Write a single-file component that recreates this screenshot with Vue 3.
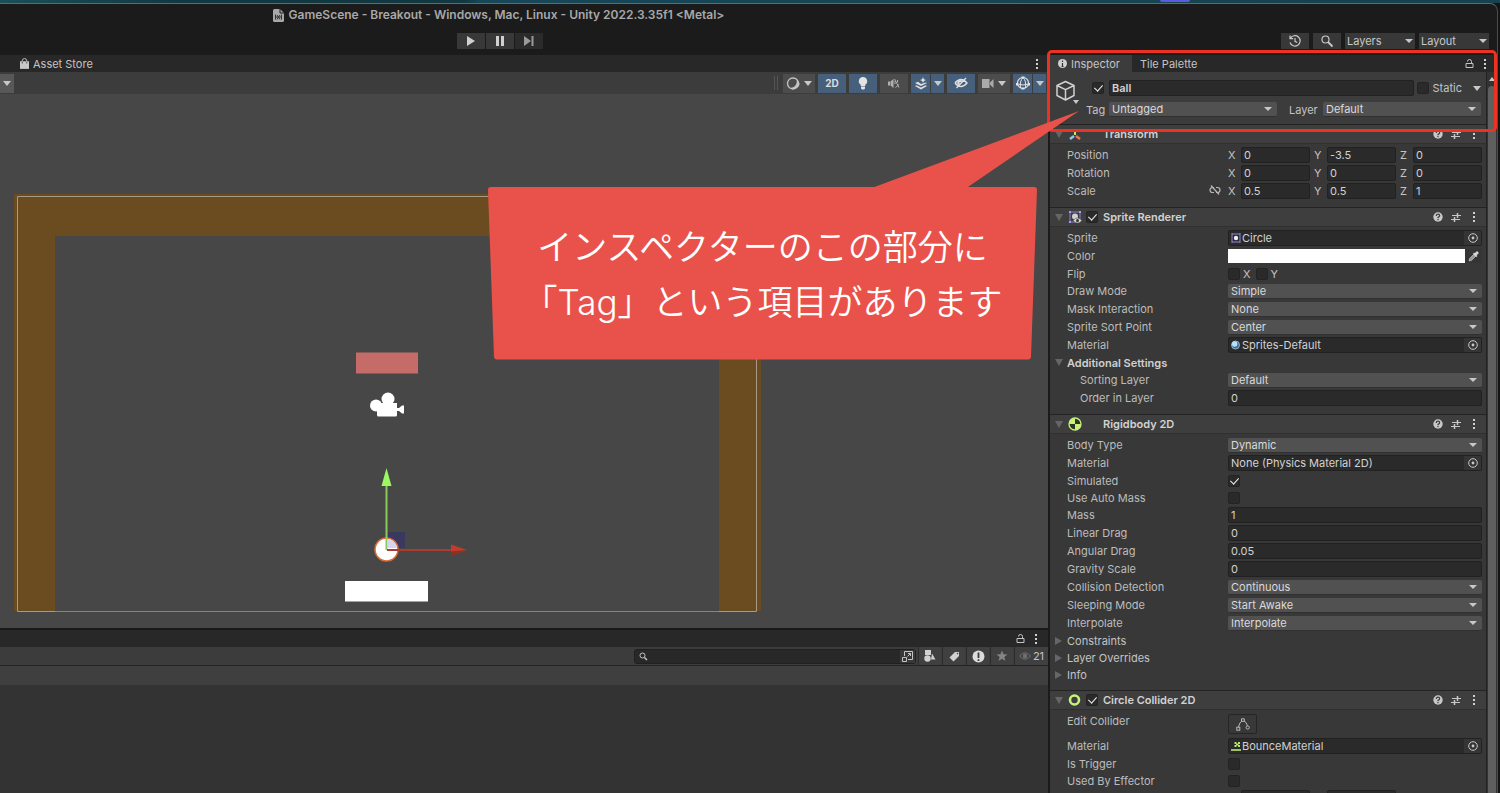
<script setup>
import { ref } from 'vue'

const sections = ref([
  {
    id: 'transform', title: 'Transform', icon: 'axes', toggle: false,
    rows: [
      { kind: 'vector', label: 'Position', values: [['X', '0'], ['Y', '-3.5'], ['Z', '0']] },
      { kind: 'vector', label: 'Rotation', values: [['X', '0'], ['Y', '0'], ['Z', '0']] },
      { kind: 'vector', label: 'Scale', link: true, values: [['X', '0.5'], ['Y', '0.5'], ['Z', '1']] }
    ]
  },
  {
    id: 'sprite', title: 'Sprite Renderer', icon: 'sprite', toggle: true,
    rows: [
      { kind: 'object', label: 'Sprite', value: 'Circle', icon: 'circleSprite' },
      { kind: 'color', label: 'Color' },
      { kind: 'flags', label: 'Flip', flags: ['X', 'Y'] },
      { kind: 'select', label: 'Draw Mode', value: 'Simple' },
      { kind: 'select', label: 'Mask Interaction', value: 'None' },
      { kind: 'select', label: 'Sprite Sort Point', value: 'Center' },
      { kind: 'object', label: 'Material', value: 'Sprites-Default', icon: 'sphere' },
      { kind: 'fold', label: 'Additional Settings', open: true },
      { kind: 'select', label: 'Sorting Layer', value: 'Default', indent: true },
      { kind: 'text', label: 'Order in Layer', value: '0', indent: true }
    ]
  },
  {
    id: 'rigidbody', title: 'Rigidbody 2D', icon: 'rigid', toggle: false,
    rows: [
      { kind: 'select', label: 'Body Type', value: 'Dynamic' },
      { kind: 'object', label: 'Material', value: 'None (Physics Material 2D)' },
      { kind: 'check', label: 'Simulated', checked: true },
      { kind: 'check', label: 'Use Auto Mass', checked: false },
      { kind: 'text', label: 'Mass', value: '1' },
      { kind: 'text', label: 'Linear Drag', value: '0' },
      { kind: 'text', label: 'Angular Drag', value: '0.05' },
      { kind: 'text', label: 'Gravity Scale', value: '0' },
      { kind: 'select', label: 'Collision Detection', value: 'Continuous' },
      { kind: 'select', label: 'Sleeping Mode', value: 'Start Awake' },
      { kind: 'select', label: 'Interpolate', value: 'Interpolate' },
      { kind: 'fold', label: 'Constraints', open: false },
      { kind: 'fold', label: 'Layer Overrides', open: false },
      { kind: 'fold', label: 'Info', open: false }
    ]
  },
  {
    id: 'collider', title: 'Circle Collider 2D', icon: 'ring', toggle: true,
    rows: [
      { kind: 'edit', label: 'Edit Collider' },
      { kind: 'object', label: 'Material', value: 'BounceMaterial', icon: 'bounce' },
      { kind: 'check', label: 'Is Trigger', checked: false },
      { kind: 'check', label: 'Used By Effector', checked: false },
      { kind: 'vector', label: '', values: [['', ''], ['', '']] }
    ]
  }
])
</script>

<template>
  <div class="desktop">
    <div class="backdrop"><span class="dock-tab"></span></div>
    <div class="window">
      <header class="titlebar">
        <h1>
          <svg width="11" height="13" viewBox="0 0 11 13"><path d="M0 1.500Q0 0 1.500 0H7l4 4v7.500q0 1.500-1.500 1.500h-8Q0 13 0 11.500z" fill="#a8a8a8"/><path d="M7 0v4h4" fill="none" stroke="#1b1b1b"/><path d="M2.500 5.500v5M8.500 5.500v5M2.500 8h6M4 6l1.500 2L7 6M4 10.500 5.500 8 7 10.500" fill="none" stroke="#333"/></svg>
          GameScene - Breakout - Windows, Mac, Linux - Unity 2022.3.35f1 &lt;Metal&gt;
        </h1>
      </header>
      <div class="mainbar">
        <div class="playback">
          <button aria-label="Play"><svg width="10" height="10" viewBox="0 0 10 10"><path d="M1 0l8 5-8 5z" fill="#d0d0d0"/></svg></button>
          <button aria-label="Pause"><svg width="10" height="10" viewBox="0 0 10 10"><path d="M1 0h3v10H1zM6 0h3v10H6z" fill="#d0d0d0"/></svg></button>
          <button aria-label="Step" class="dim"><svg width="10" height="10" viewBox="0 0 10 10"><path d="M0 0l7 5-7 5zM7.500 0h2v10h-2z" fill="#9a9a9a"/></svg></button>
        </div>
        <div class="global">
          <button aria-label="History"><svg width="14" height="14" viewBox="0 0 14 14" fill="none" stroke="#c8c8c8" stroke-width="1.200"><path d="M2.300 4.500A5.200 5.200 0 1 1 2 8.500M2 1.500v3.200h3.200M7 4v3.300l2.200 1.200"/></svg></button>
          <button aria-label="Search"><svg width="14" height="14" viewBox="0 0 14 14" fill="none" stroke="#c8c8c8" stroke-width="1.200"><circle cx="5.500" cy="5.500" r="3.500"/><path d="M8 8l4.500 4.500" stroke-width="1.800"/></svg></button>
          <span class="select dark"><select aria-label="Layers"><option>Layers</option></select></span>
          <span class="select dark"><select aria-label="Layout"><option>Layout</option></select></span>
        </div>
      </div>

      <main class="workspace">
        <div class="left">
          <nav class="tabs">
            <button class="tab store">
              <svg width="9" height="11" viewBox="0 0 10 12"><path d="M0 3.500h10V12H0z" fill="#c8c8c8"/><path d="M2.500 6V3a2.500 2.500 0 0 1 5 0v3" fill="none" stroke="#c8c8c8"/><path d="M2.500 4v2M7.500 4v2" stroke="#444"/></svg>
              Asset Store
            </button>
            <button class="more" aria-label="Scene options"><i class="dots"></i></button>
          </nav>
          <div class="scenebar">
            <button class="tool edge" aria-label="Tool settings"><i class="tri"></i></button>
            <span class="grip"></span>
            <button class="tool wide" aria-label="Shading"><svg width="15" height="15" viewBox="0 0 15 15"><circle cx="7" cy="7.500" r="5.500" fill="none" stroke="#c4c4c4" stroke-width="1.300"/><path d="M10 2.500a6.500 6.500 0 0 1-6.500 9.500Q8 15 12 11t-2-8.500z" fill="#c4c4c4"/></svg><i class="tri"></i></button>
            <button class="tool on">2D</button>
            <button class="tool on" aria-label="Lighting"><svg width="10" height="13" viewBox="0 0 10 13"><path d="M5 0a4.200 4.200 0 0 1 2.300 7.700V9H2.700V7.700A4.200 4.200 0 0 1 5 0zM3 9.500h4v2l-1 1H4l-1-1z" fill="#e4e4e4"/></svg></button>
            <button class="tool" aria-label="Audio"><svg width="12" height="11" viewBox="0 0 12 11"><path d="M0 3.500h2v4H0zM2.500 3.500 5.500 1v9L2.500 7.500z" fill="#b0b0b0"/><path d="M7 3v3M6.500 1l4.500 8.500M7.500 9.500 11 6.500M9.500 2v2.500" stroke="#b0b0b0"/></svg></button>
            <span class="split">
              <button class="tool on" aria-label="Effects"><svg width="14" height="13" viewBox="0 0 14 13"><path d="M1 6l3-1.300L7 7l5-1.500L13 6 7 9zM1 9l1.500-.7L7 10.500 11.500 8.300 13 9l-6 3.500z" fill="#e0e0e0"/><path d="M9 0l.9 2.300L12 3l-2.100.9L9 6l-.9-2.100L6 3l2.100-.7z" fill="#e0e0e0"/></svg></button>
              <button class="tool on" aria-label="Effects menu"><i class="tri"></i></button>
            </span>
            <button class="tool on" aria-label="Scene visibility"><svg width="14" height="12" viewBox="0 0 14 12" fill="none" stroke="#e0e0e0"><path d="M1 6q6-7 12 0-6 7-12 0M12 1 2.500 11" stroke-width="1.300"/><path d="M5 7.500a2 2 0 0 1 3-3" stroke-width="2"/></svg></button>
            <button class="tool wide" aria-label="Scene camera"><svg width="13" height="9" viewBox="0 0 13 9"><path d="M0 0h7.500v9H0zM8 3.500 11.500 0v9L8 5.500z" fill="#aaa"/></svg><i class="tri"></i></button>
            <span class="split">
              <button class="tool on" aria-label="Gizmos"><svg width="14" height="14" viewBox="0 0 14 14" fill="none" stroke="#e4e4e4"><circle cx="7" cy="7" r="5.500" stroke-width="1.200"/><path d="M7 1.500Q3.500 5 4.500 12M7 1.500Q10.500 5 9.500 12M1.500 8q5.500 2 11 0"/><path d="M5.500 1.500h3M1 7v2.500M13 7v2.500M5.500 12.500h3" stroke-width="2"/></svg></button>
              <button class="tool on" aria-label="Gizmos menu"><i class="tri"></i></button>
            </span>
          </div>

          <div class="scene">
            <svg width="100%" height="100%">
              <path d="M14 100H761V517H719V142H55V517H14z" fill="#6b4c21"/>
              <path d="M17.500 102.500H756.500V517.500H17.500z" fill="none" stroke="#a79a88"/>
              <path d="M55 517.500H719" stroke="#858585"/>
              <path d="M356 258.500h62v21h-62z" fill="#c56c68"/>
              <g fill="#fff">
                <circle cx="376" cy="311.500" r="6"/><circle cx="388" cy="305" r="6.500"/>
                <path d="M377 309h20v5h2l3-2.500h2v8h-2l-3-2.500h-2v4q0 1.500-1.500 1.500h-17q-1.500 0-1.500-1.500z"/>
                <path d="M345 487h83v20.500h-83z"/>
              </g>
              <path d="M388 438h17v16h-17z" fill="#39395f"/>
              <circle cx="386.500" cy="455.500" r="11.500" fill="#fff" stroke="#d96b35" stroke-width="1.500"/>
              <path d="M388 445a11 11 0 0 1 9 9h-9z" fill="#d5d5f2"/>
              <path d="M386.500 456V391" stroke="#8bc95a" stroke-width="2"/>
              <path d="M386.500 374l5 18h-10z" fill="#9cf762"/>
              <path d="M387 456H451" stroke="#ab3a31" stroke-width="2"/>
              <path d="M451 450.500l16 5.500-16 5.500z" fill="#c23b2b"/>
              <path d="M451 457.500l16-1.500-16 5.500z" fill="#8e2f22"/>
            </svg>
          </div>

          <nav class="tabs project">
            <button class="lock" aria-label="Lock project"><svg width="9" height="9" viewBox="0 0 9 9" fill="none" stroke="#c4c4c4"><path d="M1 4.500h7v4H1zM2.500 2.500q0-2 2-2t2 2v2"/></svg></button>
            <button class="more" aria-label="Project options"><i class="dots"></i></button>
          </nav>
          <div class="projectbar">
            <div class="search">
              <svg width="9" height="9" viewBox="0 0 9 9" fill="none" stroke="#c4c4c4"><circle cx="3.500" cy="3.500" r="2.500"/><path d="M5.500 5.500 8 8" stroke-width="1.500"/></svg>
              <input type="text" aria-label="Search project">
              <button aria-label="Open search window"><svg width="11" height="11" viewBox="0 0 11 11" fill="none" stroke="#c4c4c4"><path d="M2.500 5V.5h8v8H6M.5 6.500h4v4h-4zM5.500 5.500l3-3M6 2.500h2.500V5"/></svg></button>
            </div>
            <button aria-label="Filter by type"><svg width="12" height="12" viewBox="0 0 12 12" fill="#d0d0d0"><path d="M1 0h6v5H1zM8 3.500l3.500 6H7z"/><circle cx="3.500" cy="8.500" r="3.200"/></svg></button>
            <button aria-label="Filter by label"><svg width="11" height="11" viewBox="0 0 11 11"><path d="M6 1h4v4L4.500 10.500l-4-4z" fill="#d0d0d0"/><circle cx="8.500" cy="2.500" r=".8" fill="#444"/></svg></button>
            <button aria-label="Filter by log"><svg width="13" height="13" viewBox="0 0 13 13"><circle cx="6.500" cy="6.500" r="6" fill="#dcdcdc"/><path d="M6.500 2.500V8M6.500 9.200V11" stroke="#3c3c3c" stroke-width="1.800"/></svg></button>
            <button aria-label="Favorites"><svg width="12" height="12" viewBox="0 0 12 12"><path d="M6 .5 7.500 4.300l4 .2-3.200 2.500 1.200 4L6 8.800 2.500 11l1.200-4L.5 4.500l4-.2z" fill="#858585"/></svg></button>
            <button class="count"><svg width="12" height="8" viewBox="0 0 12 8"><path d="M.5 4q5.500-6.500 11 0-5.500 6.500-11 0z" fill="none" stroke="#707070"/><circle cx="6" cy="4" r="2.300" fill="#707070"/></svg>21</button>
          </div>
          <div class="crumbs"></div>
          <div class="assets"></div>
        </div>

        <aside class="inspector">
          <nav class="tabs">
            <button class="tab active"><svg width="9" height="9" viewBox="0 0 9 9"><circle cx="4.500" cy="4.500" r="4.500" fill="#d0d0d0"/><path d="M4.500 1.500V3M4.500 4v3.500M3.500 7.500h2" stroke="#333" stroke-width="1.200"/></svg>Inspector</button>
            <button class="tab">Tile Palette</button>
            <button class="lock" aria-label="Lock inspector"><svg width="9" height="9" viewBox="0 0 9 9" fill="none" stroke="#c4c4c4"><path d="M1 4.500h7v4H1zM2.500 2.500q0-2 2-2t2 2v2"/></svg></button>
            <button class="more" aria-label="Inspector options"><i class="dots"></i></button>
          </nav>
          <div class="scroller">
            <div class="content">
              <div class="object">
                <button class="cube" aria-label="Object icon">
                  <svg width="20" height="22" viewBox="0 0 20 22" fill="none" stroke="#d0d0d0" stroke-width="1.500" stroke-linejoin="round"><path d="M9.500 1.500 18 5.500v10l-8.500 4.500L1 15.500v-10zM1 5.500l8.500 4.200L18 5.500M9.500 9.700V20"/></svg>
                  <i class="tri"></i>
                </button>
                <div class="ident">
                  <div class="line">
                    <input type="checkbox" checked aria-label="Active" class="active-box">
                    <input type="text" class="field name" value="Ball" aria-label="Name">
                    <input type="checkbox" id="static">
                    <label for="static">Static</label>
                    <button class="drop" aria-label="Static options"><i class="tri"></i></button>
                  </div>
                  <div class="line">
                    <label for="tag" class="tag">Tag</label>
                    <span class="select tag-select"><select id="tag"><option>Untagged</option></select></span>
                    <label for="layer" class="layer">Layer</label>
                    <span class="select layer-select"><select id="layer"><option>Default</option></select></span>
                  </div>
                </div>
              </div>

              <section v-for="s in sections" :key="s.id">
                <header class="head">
                  <button class="fold-btn" :aria-label="'Fold ' + s.title"><i class="fold open"></i></button>
                  <svg class="kind" width="14" height="14" viewBox="0 0 14 14">
                    <template v-if="s.icon === 'axes'">
                      <path d="M7 8V2" stroke="#c8e66a" stroke-width="2"/><path d="M6 9 2 12" stroke="#8fc7ee" stroke-width="2.500"/><path d="M8 9l4 3" stroke="#f0764a" stroke-width="2.500"/>
                    </template>
                    <template v-else-if="s.icon === 'sprite'">
                      <path d="M2 2h10v10H2z" fill="none" stroke="#8a7fd0"/><path d="M1 1h2v2H1zM11 1h2v2h-2zM1 11h2v2H1z" fill="#a89cf0"/><circle cx="7" cy="6.500" r="3" fill="#d0d0d0"/><path d="M5 10.500q4.500-5 9 0-4.500 5-9 0z" fill="#d8d8d8" stroke="#3c3c3c" stroke-width=".5"/><circle cx="9.500" cy="10.500" r="1.500" fill="#333"/>
                    </template>
                    <template v-else-if="s.icon === 'rigid'">
                      <circle cx="7" cy="7" r="6" fill="#2e3420" stroke="#c5f27a" stroke-width="1.300"/><path d="M7 7V1a6 6 0 0 0-6 6zM7 7v6a6 6 0 0 0 6-6z" fill="#c5f27a"/>
                    </template>
                    <circle v-else cx="6.500" cy="7" r="4.500" fill="none" stroke="#c5f27a" stroke-width="2.600"/>
                  </svg>
                  <span class="slot"><input v-if="s.toggle" type="checkbox" checked :aria-label="'Enable ' + s.title"></span>
                  <h2>{{ s.title }}</h2>
                  <button aria-label="Help"><svg width="10" height="10" viewBox="0 0 10 10"><circle cx="5" cy="5" r="4.700" fill="#c8c8c8"/><path d="M3.300 4q0-1.800 1.700-1.800T6.700 3.800Q6.700 4.800 5 5.400V6.200M5 7v1.300" fill="none" stroke="#3c3c3c" stroke-width="1.200"/></svg></button>
                  <button aria-label="Presets"><svg width="10" height="10" viewBox="0 0 10 10" stroke="#c8c8c8"><path d="M1 3.500h9M0 7.500h9" stroke-width="1.200"/><path d="M6.500 1v5M3.500 5v5" stroke-width="1.500"/></svg></button>
                  <button aria-label="Component options"><i class="dots"></i></button>
                </header>
                <div class="body">
                  <div v-for="(r, i) in s.rows" :key="i" :class="['row', 'row-' + r.kind, { indent: r.indent }]">
                    <button v-if="r.kind === 'fold'" :class="['foldout', { strong: r.open }]"><i :class="['fold', { open: r.open }]"></i>{{ r.label }}</button>
                    <template v-else>
                      <label :for="s.id + i">{{ r.label }}</label>
                      <svg v-if="r.link" class="link" width="12" height="10" viewBox="0 0 12 10" fill="none" stroke="#b8b8b8" stroke-width="1.200"><path d="M5 2.500H3.500a2.500 2.500 0 0 0 0 5H5M7 2.500h1.500a2.500 2.500 0 0 1 0 5H7M2 .5l8 9"/></svg>
                      <span v-if="r.kind === 'select'" class="select"><select :id="s.id + i"><option>{{ r.value }}</option></select></span>
                      <input v-else-if="r.kind === 'text'" :id="s.id + i" type="text" class="field" :value="r.value">
                      <input v-else-if="r.kind === 'check'" :id="s.id + i" type="checkbox" :checked="r.checked">
                      <div v-else-if="r.kind === 'vector'" class="vector">
                        <span v-for="(v, n) in r.values" :key="n" class="axis">
                          <label :for="s.id + i + 'v' + n">{{ v[0] }}</label>
                          <input :id="s.id + i + 'v' + n" type="text" class="field" :value="v[1]">
                        </span>
                      </div>
                      <div v-else-if="r.kind === 'object'" class="field picker">
                        <svg v-if="r.icon" width="10" height="10" viewBox="0 0 10 10">
                          <template v-if="r.icon === 'circleSprite'"><path d="M1 0v10M9 0v10M1 1h8M1 9h8" stroke="#8f84d8"/><circle cx="5" cy="5" r="2.200" fill="#eee"/></template>
                          <template v-else-if="r.icon === 'sphere'"><circle cx="4.500" cy="5" r="4" fill="#356f9c" stroke="#b9c5cc" stroke-width=".8"/><circle cx="3.700" cy="4" r="2.700" fill="#b6e4ff"/></template>
                          <template v-else><path d="M0 9h10" stroke="#c5f27a" stroke-width="1.500"/><path d="M3.500 1h2v1.500h1.500V1h2v2H7.500v1h1.500v2h-2V4.500H5.500V6h-2V4H5V3H3.500z" fill="#b4e868"/></template>
                        </svg>
                        <input :id="s.id + i" type="text" readonly :value="r.value">
                        <button aria-label="Select object"><svg width="10" height="10" viewBox="0 0 10 10"><circle cx="5" cy="5" r="4.300" fill="none" stroke="#c8c8c8"/><circle cx="5" cy="5" r="1.400" fill="#c8c8c8"/></svg></button>
                      </div>
                      <div v-else-if="r.kind === 'color'" class="field picker">
                        <input :id="s.id + i" type="color" value="#ffffff">
                        <button aria-label="Pick a colour"><svg width="11" height="11" viewBox="0 0 11 11"><path d="M1 10l.5-2.500L6 3l2 2-4.500 4.500z" fill="#999" stroke="#c8c8c8" stroke-width=".6"/><path d="M5.500 2 9 5.500M6.500 3.500 9 1l1 1-2.500 2.500z" stroke="#d8d8d8" stroke-width="1.300" fill="#d8d8d8"/></svg></button>
                      </div>
                      <div v-else-if="r.kind === 'flags'" class="flags">
                        <template v-for="(f, n) in r.flags" :key="f">
                          <input :id="n ? s.id + f : s.id + i" type="checkbox"><label :for="n ? s.id + f : s.id + i">{{ f }}</label>
                        </template>
                      </div>
                      <button v-else :id="s.id + i" class="edit" aria-label="Edit Collider"><svg width="14" height="13" viewBox="0 0 14 13" fill="none" stroke="#b8b8b8"><path d="M2.500 9Q3.500 4 6 3M8 3q2.500 1 3.500 5M5.500.8h2.800v2.500H5.500z"/><rect x=".8" y="9.200" width="3" height="3"/><circle cx="11.700" cy="9.500" r="1.600"/></svg></button>
                    </template>
                  </div>
                </div>
              </section>
            </div>
            <div class="scrollbar"><i class="up"></i><span class="thumb"></span></div>
          </div>
        </aside>

        <div class="frame"></div>
        <div class="callout">
          <svg width="592" height="250" viewBox="0 0 592 250"><path d="M3 80H546L540 246.500H9z" fill="#e9524b" stroke="#e9524b" stroke-width="6" stroke-linejoin="round"/><path d="M381 79 591 1 477 79z" fill="#e9524b"/></svg>
          <p>インスペクターのこの部分に<br>「Tag」という項目があります</p>
        </div>
      </main>
    </div>
  </div>
</template>

<style>
body { background: #191919; }
</style>

<style scoped>
.desktop {
  height: 100vh;
  overflow: hidden;
  display: flex;
  flex-direction: column;
  background: #141414;
  color: #c4c4c4;
  font: 11px/16px Inter, "Noto Sans CJK JP", sans-serif;
}
.desktop *, .desktop *::before, .desktop *::after { box-sizing: border-box; }
button, input, select { font: inherit; color: inherit; border: 0; margin: 0; padding: 0; background: none; border-radius: 0; }
button { display: flex; align-items: center; justify-content: center; }
input, select { min-width: 0; outline: 0; }
svg { display: block; flex: none; }
h1, h2, p { margin: 0; }

.backdrop { height: 3px; flex: none; background: linear-gradient(90deg, #1a5058, #123842 12%, #123842 31%, #174858 32%, #17424f); display: flex; justify-content: flex-end; }
.dock-tab { width: 30px; height: 2px; margin-right: 310px; background: #5b5be0; border-radius: 0 0 2px 2px; }
.window { flex: 1; min-height: 0; margin-right: 2px; display: flex; flex-direction: column; background: #1b1b1b; border-top: 1px solid #5d6b6c; border-right: 1px solid #4c4c4c; border-radius: 0 8px 0 0; }
.titlebar { height: 22px; flex: none; margin-right: 500px; display: flex; align-items: center; justify-content: center; }
h1 { display: flex; align-items: center; gap: 5px; font-size: 12px; font-weight: 600; color: #a8a8a8; white-space: nowrap; }
.mainbar { height: 30px; margin-bottom: -1px; flex: none; display: flex; align-items: center; }
.playback { flex: 1; display: flex; justify-content: center; gap: 1px; margin-right: 282px; }
.playback button { width: 28px; height: 16px; background: #383838; }
.playback .dim { background: #2b2b2b; }
.global { display: flex; gap: 4px; padding-right: 8px; }
.global button { width: 28px; height: 16px; background: #383838; }
.global .select { width: 70px; }

.select { position: relative; display: flex; flex: 1; min-width: 0; height: 15px; background: #515151; border-radius: 2px; border-bottom: 1px solid #303030; color: #dadada; }
.select select { appearance: none; width: 100%; padding: 0 14px 0 3px; line-height: 14px; }
.select::after { content: ""; position: absolute; right: 5px; top: 5px; border: 4px solid transparent; border-top-color: #c8c8c8; border-bottom: 0; pointer-events: none; }
.select.dark { flex: none; height: 16px; background: #383838; border: 0; border-radius: 0; color: #c8c8c8; }
.select.dark select { padding-left: 2px; }
.select.dark::after { right: 2px; top: 6px; }
.tri { flex: none; border: 4px solid transparent; border-top: 5px solid #c8c8c8; border-bottom: 0; }
.dots { width: 2px; height: 2px; background: #d0d0d0; box-shadow: 0 -4px #d0d0d0, 0 4px #d0d0d0; }

.workspace { position: relative; flex: 1; min-height: 0; display: flex; gap: 2px; }
.left { flex: 1; min-width: 0; display: flex; flex-direction: column; background: #333; }
.tabs { height: 17px; flex: none; display: flex; align-items: center; background: #282828; }
.tab { height: 17px; padding: 0 8px; gap: 5px; }
.tab.active { background: #3c3c3c; padding: 0 12px 0 8px; gap: 4px; }
.store { padding: 0 20px; gap: 4px; }
.more { width: 15px; height: 16px; margin-left: auto; margin-right: 4px; }
.lock { margin-left: auto; width: 16px; }
.lock + .more { margin-left: 0; margin-right: 5px; }
.scenebar { height: 22px; flex: none; display: flex; align-items: center; gap: 3px; padding-right: 2px; background: #3c3c3c; }
.tool { width: 28px; height: 19px; background: #4c4c4c; gap: 2px; font-weight: 700; font-size: 10px; color: #dcdcdc; }
.tool.on { background: #46607c; }
.tool.wide { width: 32px; gap: 3px; }
.tool.edge { width: 14px; margin-right: auto; background: #585858; }
.grip { width: 4px; height: 14px; margin-right: 2px; border: 1px solid #555; border-width: 0 1px; }
.split { display: flex; gap: 1px; }
.split .tool { width: 19px; }
.split .tool + .tool { width: 13px; }
.scene { flex: 1; min-height: 0; background: #474747; border-bottom: 2px solid #191919; overflow: hidden; }
.project { height: 17px; }
.projectbar { height: 19px; flex: none; display: flex; justify-content: flex-end; gap: 1px; background: #3c3c3c; border-bottom: 1px solid #232323; }
.projectbar > button { width: 23px; background: #404040; border-left: 1px solid #2c2c2c; }
.projectbar .count { width: 34px; gap: 2px; }
.search { width: 282px; height: 15px; margin: 2px 1px 0 0; padding-left: 4px; display: flex; align-items: center; background: #282828; border: 1px solid #202020; border-radius: 3px; }
.search input { flex: 1; }
.search button { width: 15px; height: 13px; background: #383838; }
.crumbs { height: 19px; flex: none; background: #3f3f3f; }
.assets { height: 108px; flex: none; background: #333; }

.inspector { width: 447px; flex: none; display: flex; flex-direction: column; background: #383838; }
.scroller { flex: 1; min-height: 0; display: flex; overflow: hidden; }
.content { flex: 1; min-width: 0; border-right: 1px solid #232323; }
.scrollbar { width: 10px; background: #333; display: flex; flex-direction: column; align-items: center; }
.up { margin: 5px 0; border: 3px solid transparent; border-bottom: 4px solid #c8c8c8; border-top: 0; }
.thumb { width: 8px; flex: 1; background: #5f5f5f; border-radius: 4px 4px 0 0; }
.object { display: flex; padding: 8px 5px 7px 6px; background: #3c3c3c; }
.cube { position: relative; width: 30px; height: 22px; justify-content: flex-start; }
.cube .tri { position: absolute; right: 7px; bottom: -2px; border-width: 3px; border-top-width: 4px; border-bottom: 0; }
.ident { flex: 1; min-width: 0; display: flex; flex-direction: column; gap: 6px; }
.line { display: flex; align-items: center; height: 16px; }
.line + .line { height: 15px; }
.active-box { margin: 0 5px 0 6px; }
.name { font-weight: 600; margin-right: 3px; }
.line label { margin-left: 4px; }
.line .tag { width: 23px; margin: 0; }
.line .layer { width: 34px; margin: 0 0 0 12px; }
.tag-select { flex-grow: 17; }
.layer-select { flex-grow: 16; }
.drop { width: 8px; margin-left: 11px; }

input[type="checkbox"] { appearance: none; width: 12px; height: 12px; flex: none; background: #2a2a2a; border: 1px solid #232323; border-radius: 2px; display: grid; place-items: center; }
input[type="checkbox"]:checked::after { content: ""; width: 5px; height: 8px; border: solid #f0f0f0; border-width: 0 1px 1px 0; margin-top: -2px; transform: rotate(42deg); }
.field { flex: 1; height: 16px; padding: 0 2px; background: #2a2a2a; border: 1px solid #212121; border-radius: 2px; color: #d2d2d2; line-height: 14px; }

.head { height: 20px; display: flex; align-items: center; padding: 0 3px 0 4px; background: #3e3e3e; border-top: 1px solid #232323; border-bottom: 1px solid #303030; }
.head > button { width: 18px; height: 16px; }
.head .fold-btn { width: 10px; }
.head .kind { margin: 0 4px; }
.slot { width: 12px; margin-right: 5px; display: flex; }
h2 { flex: 1; font-size: 11px; font-weight: 600; color: #d2d2d2; }
.fold { flex: none; border: 4px solid transparent; border-left: 7px solid #666; border-right: 0; }
.fold.open { border: 4px solid transparent; border-top: 7px solid #666; border-bottom: 0; }
.body { padding: 2px 4px 7px 17px; }
.row { position: relative; height: 18px; display: flex; align-items: center; }
.row > label { width: 161px; flex: none; color: #bcbcbc; white-space: nowrap; }
.row.indent > label { padding-left: 13px; }
.row-check, .row-flags, .row-fold { height: 17px; }
.row-edit { height: 25px; align-items: flex-start; padding-top: 1px; }
.edit { width: 29px; height: 20px; margin-top: 1px; background: #383838; border: 1px solid #252525; border-radius: 2px; }
.foldout { margin-left: -12px; gap: 4px; height: 16px; }
.foldout .fold { width: 8px; }
.strong { font-weight: 600; color: #d0d0d0; }
.link { position: absolute; left: 142px; top: 3px; }
.vector { flex: 1; display: grid; grid-template-columns: repeat(3, 1fr); gap: 4px; }
.axis { display: flex; min-width: 0; }
.axis label { width: 13px; flex: none; }
.picker { display: flex; align-items: center; padding: 0 0 0 2px; }
.picker > input { flex: 1; padding: 0 0 0 1px; height: 14px; }
.picker > button { width: 17px; height: 14px; background: #353535; }
.picker > input[type="text"]:first-child { padding: 0; }
.row-color .picker { padding: 0; border: 0; height: 14px; }
input[type="color"] { appearance: none; }
.picker > input[type="color"] { padding: 0; }
input[type="color"]::-webkit-color-swatch-wrapper { padding: 0; }
input[type="color"]::-webkit-color-swatch { border: 0; }
.flags { display: flex; align-items: center; }
.flags label { margin: 0 5px 0 3px; }

.frame { position: absolute; top: -5px; right: 0; width: 450px; height: 82px; border: 3px solid #ec3323; border-radius: 5px; pointer-events: none; }
.callout { position: absolute; top: 55px; right: 417px; width: 592px; pointer-events: none; }
.callout p { position: absolute; left: 0; top: 110px; width: 549px; text-align: center; color: #fff; font-size: 35px; font-weight: 350; line-height: 55px; white-space: nowrap; }
</style>
